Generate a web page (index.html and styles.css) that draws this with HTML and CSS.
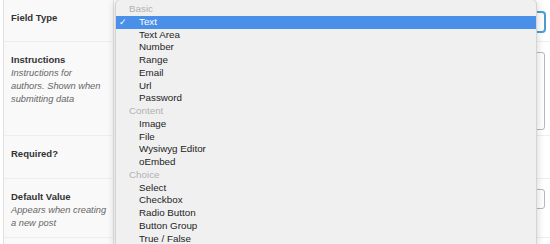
FILE: index.html
```html
<!DOCTYPE html>
<html lang="en">
<head>
  <meta charset="UTF-8">
  <title>Field Settings</title>
  <meta name="viewport" content="width=device-width, initial-scale=1">
  <link rel="stylesheet" href="styles.css">
</head>
<body>
  <div class="field-table">
    <div class="field-row row-type">
      <div class="field-label"><label>Field Type</label></div>
      <div class="field-input">
        <div class="fake-select focused"></div>
      </div>
    </div>

    <div class="field-row row-instructions">
      <div class="field-label">
        <label>Instructions</label>
        <p class="description">Instructions for authors. Shown when submitting data</p>
      </div>
      <div class="field-input">
        <div class="fake-textarea"></div>
      </div>
    </div>

    <div class="field-row row-required">
      <div class="field-label"><label>Required?</label></div>
      <div class="field-input"></div>
    </div>

    <div class="field-row row-default">
      <div class="field-label">
        <label>Default Value</label>
        <p class="description">Appears when creating a new post</p>
      </div>
      <div class="field-input">
        <div class="fake-input"></div>
      </div>
    </div>

    <div class="field-row row-last">
      <div class="field-label"></div>
      <div class="field-input"></div>
    </div>
  </div>

  <!-- native select popup, open over the form -->
  <ul class="dropdown">
    <li class="group">Basic</li>
    <li class="option selected"><span class="check">✓</span>Text</li>
    <li class="option">Text Area</li>
    <li class="option">Number</li>
    <li class="option">Range</li>
    <li class="option">Email</li>
    <li class="option">Url</li>
    <li class="option">Password</li>
    <li class="group">Content</li>
    <li class="option">Image</li>
    <li class="option">File</li>
    <li class="option">Wysiwyg Editor</li>
    <li class="option">oEmbed</li>
    <li class="group">Choice</li>
    <li class="option">Select</li>
    <li class="option">Checkbox</li>
    <li class="option">Radio Button</li>
    <li class="option">Button Group</li>
    <li class="option">True / False</li>
  </ul>
</body>
</html>
```

FILE: styles.css
```css
* {
  box-sizing: border-box;
}

body {
  margin: 0;
  font-family: "Liberation Sans", Arial, sans-serif;
  background: #ffffff;
  color: #333;
  overflow: hidden;
}

.field-table {
  margin-left: 3px;
  border-left: 1px solid #e1e1e1;
}

.field-row {
  display: flex;
  border-bottom: 1px solid #eeeeee;
}

.field-label {
  width: 110px;
  flex-shrink: 0;
  background: #f9f9f9;
  border-right: 1px solid #e1e1e1;
  padding: 11px 2px 0 7px;
}

.field-label label {
  display: block;
  font-size: 9.5px;
  font-weight: bold;
  line-height: 13px;
  color: #333;
}

.description {
  width: 96px;
  margin: 1px 0 0;
  font-size: 9.3px;
  font-style: italic;
  line-height: 13px;
  color: #666;
}

.field-input {
  flex: 1;
  padding: 12px 5px 0 10px;
}

.row-type {
  height: 42px;
}

.row-instructions {
  height: 94px;
}

.row-required {
  height: 43px;
}

.row-default {
  height: 59px;
}

.row-last {
  height: 20px;
}

.fake-select,
.fake-input {
  height: 20px;
  border: 1px solid #8c8f94;
  border-radius: 3px;
  background: #fff;
}

.fake-select.focused {
  border-color: #4b9cd3;
  box-shadow: 0 0 0 1px #4b9cd3;
}

.fake-input {
  margin-top: -2px;
  border-color: #b4b9be;
}

.fake-textarea {
  margin-top: -2px;
  height: 78px;
  border: 1px solid #b4b9be;
  border-radius: 3px;
  background: #fff;
}

.dropdown {
  position: absolute;
  top: -1px;
  left: 115px;
  width: 422px;
  height: 246px;
  margin: 0;
  padding: 3px 0 0;
  list-style: none;
  background: #f0f0f0;
  border: 1px solid #d4d4d4;
  border-radius: 5px 5px 0 0;
  box-shadow: 0 2px 8px rgba(0, 0, 0, 0.18);
  font-size: 9.8px;
  line-height: 12.75px;
  overflow: hidden;
}

.dropdown li {
  height: 12.75px;
  white-space: nowrap;
}

.group {
  padding-left: 13px;
  color: #b0b0b0;
}

.option {
  position: relative;
  padding-left: 23px;
  color: #1e1e1e;
}

.option.selected {
  background: #4a90e8;
  color: #fff;
}

.check {
  position: absolute;
  left: 3px;
  top: 0;
  font-size: 9px;
}
```
